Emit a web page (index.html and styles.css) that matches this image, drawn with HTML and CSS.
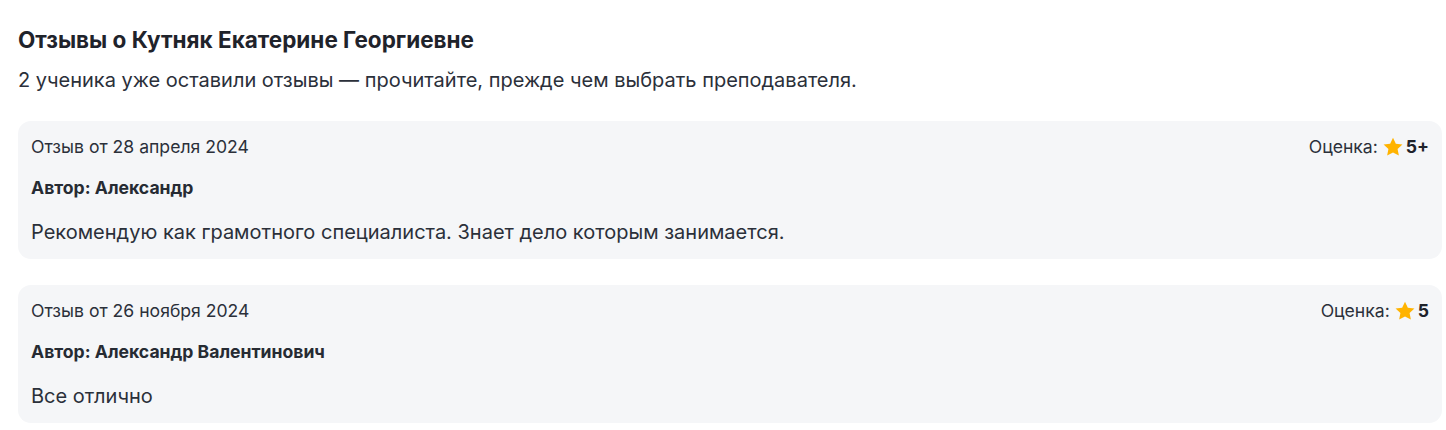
FILE: index.html
```html
<!DOCTYPE html>
<html lang="ru">
<head>
<meta charset="utf-8">
<link rel="stylesheet" href="styles.css">
</head>
<body>
<section class="reviews">
  <h2 class="title">Отзывы о Кутняк Екатерине Георгиевне</h2>
  <p class="subtitle">2 ученика уже оставили отзывы — прочитайте, прежде чем выбрать преподавателя.</p>
  <div class="list">
    <article class="card">
      <div class="card-head">
        <span class="date">Отзыв от 28 апреля 2024</span>
        <span class="rating">Оценка: <svg class="star" viewBox="0 0 24 24"><path d="M12 1.8l3.1 6.6 7.2.9-5.3 5 1.4 7.1L12 17.9l-6.4 3.5 1.4-7.1-5.3-5 7.2-.9z"/></svg><b>5+</b></span>
      </div>
      <div class="author">Автор: Александр</div>
      <p class="text">Рекомендую как грамотного специалиста. Знает дело которым занимается.</p>
    </article>
    <article class="card">
      <div class="card-head">
        <span class="date">Отзыв от 26 ноября 2024</span>
        <span class="rating">Оценка: <svg class="star" viewBox="0 0 24 24"><path d="M12 1.8l3.1 6.6 7.2.9-5.3 5 1.4 7.1L12 17.9l-6.4 3.5 1.4-7.1-5.3-5 7.2-.9z"/></svg><b>5</b></span>
      </div>
      <div class="author">Автор: Александр Валентинович</div>
      <p class="text">Все отлично</p>
    </article>
  </div>
</section>
</body>
</html>
```
FILE: styles.css
```css
* { box-sizing: border-box; }
html, body { margin: 0; background: #fff; }
body {
  font-family: Inter, "Noto Sans", sans-serif;
  color: #2b303a;
}
.reviews { padding: 27px 4px 0 18px; }
.title {
  margin: 0;
  font-size: 22.5px;
  line-height: 26px;
  font-weight: 700;
  color: #1f232b;
}
.subtitle {
  margin: 14px 0 0;
  font-size: 20px;
  line-height: 26px;
  color: #2b303a;
}
.list {
  margin-top: 28px;
  display: flex;
  flex-direction: column;
  gap: 26px;
}
.card {
  background: #f5f6f8;
  border-radius: 13px;
  padding: 13px 13px 12px 13px;
}
.card-head {
  display: flex;
  justify-content: space-between;
  align-items: center;
  font-size: 17.6px;
  line-height: 26px;
}
.rating { display: inline-flex; align-items: center; }
.star { width: 22px; height: 22px; fill: #ffb300; margin: 0 2px 0 4px; }
.rating b { font-weight: 700; color: #1f232b; }
.author {
  margin-top: 15px;
  font-size: 17.6px;
  line-height: 26px;
  font-weight: 700;
  color: #262b33;
}
.text {
  margin: 16px 0 0;
  font-size: 20px;
  line-height: 30px;
}
```
